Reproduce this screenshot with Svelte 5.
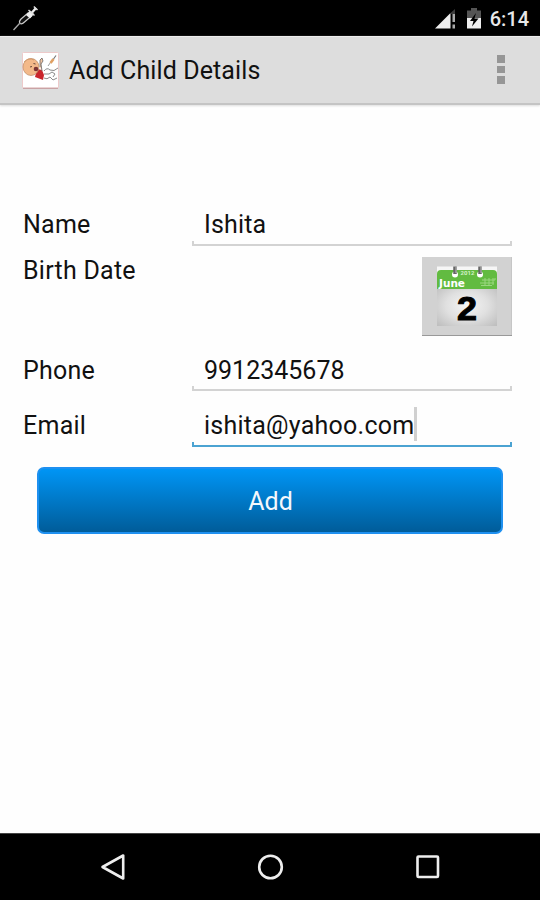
<script>
	let child = {
		name: 'Ishita',
		phone: '9912345678',
		email: 'ishita@yahoo.com'
	};

	let focused = 'email';
</script>

<div class="screen">
	<header class="status">
		<svg class="syringe" width="28" height="28" viewBox="0 0 28 28">
			<path d="M1.500 26 7.500 19.500" stroke="#aaa" stroke-width="1.300" />
			<path d="M8 19.500 Q6.500 17.500 9 15 L16 9 19.500 12 12.500 18 Q10 20.500 8 19.500Z" fill="#111" stroke="#ccc" stroke-width="1.200" />
			<path d="M14 11 18 6.500 22 10 18 14.500Z" fill="#eee" />
			<path d="M16.500 6 22.500 11.500" stroke="#ddd" stroke-width="1.400" />
			<path d="M20 8.500 24 4" stroke="#eee" stroke-width="2.400" />
			<path d="M21.800 2.500 25.500 6" stroke="#ddd" stroke-width="1.500" />
		</svg>
		<div class="indicators">
			<svg class="signal" width="22" height="20" viewBox="0 0 22 20">
				<path d="M0 19.500 15.500 4V19.500Z" fill="#eee" />
				<path d="M15.500 4 20 0V5H15.500Z" fill="#3c3c3c" />
				<path d="M17.500 5H20V13H17.500ZM17.500 15.500H20V19.500H17.500Z" fill="#aaa" />
			</svg>
			<svg class="battery" width="14" height="21" viewBox="0 0 14 21">
				<path d="M0 2.500H4V0H10V2.500H14V11H0Z" fill="#555" />
				<path d="M0 10H14V20.500H0Z" fill="#eee" />
				<path d="M9 5 3 13H6.500L5 18.500 11.500 10.500H7.500Z" fill="#000" />
			</svg>
			<span class="clock">6:14</span>
		</div>
	</header>

	<div class="action-bar">
		<svg class="app-icon" width="37" height="37" viewBox="0 0 37 37">
			<rect x=".5" y=".5" width="36" height="35.500" rx="1" fill="#fff" stroke="#edcaca" />
			<path d="M1 36.300H36" stroke="#c9a3a5" stroke-width="1.200" />
			<path d="M15 17 20 18 22 23 21 28 13 25Z" fill="#c9252c" />
			<path d="M18 15 18 8 20 6 21 9 19 12 20 19" fill="#f4c5a2" stroke="#666" stroke-width=".8" />
			<ellipse cx="9" cy="15" rx="8" ry="8.500" fill="#f3b98a" stroke="#b98a66" stroke-width=".7" />
			<path d="M2 10Q7 5 12 8" fill="none" stroke="#d39a6c" />
			<circle cx="14" cy="17" r="2.300" fill="#7a3435" />
			<path d="M8 15 10 14.500M11.500 11.500 13.500 12" stroke="#64463a" />
			<path d="M22 19Q25 15 28 18Q32 20 36 16M22 26Q25 28 28 25L31 28 35 26M22 22 27 22 30 20 33 22 31 25" fill="none" stroke="#8c8c8c" />
			<path d="M26 14 28.500 10.500" stroke="#999" />
			<path d="M28.500 11 31.500 7" stroke="#e0a063" stroke-width="2.600" />
			<path d="M31.500 7 34 3.500" stroke="#777" stroke-width="1.200" />
		</svg>
		<h1>Add Child Details</h1>
		<div class="overflow">
			<i></i>
			<i></i>
			<i></i>
		</div>
	</div>

	<main>
		<div class="row">
			<span class="label">Name</span>
			<div class="field" class:focused={focused === 'name'}><span>{child.name}</span></div>
		</div>
		<div class="row date">
			<span class="label">Birth Date</span>
			<div class="picker">
				<svg width="90" height="79" viewBox="0 0 90 79">
					<defs>
						<radialGradient id="page" cx=".5" cy=".5" r=".7">
							<stop offset="0" stop-color="#f5f5f5" />
							<stop offset=".5" stop-color="#e0e0e0" />
							<stop offset="1" stop-color="#bdbdbd" />
						</radialGradient>
					</defs>
					<rect x="15" y="9.500" width="60" height="10" fill="#f6f6f6" />
					<rect x="15" y="28" width="60" height="41" fill="url(#page)" />
					<path d="M15 32V17Q15 13 19 13H71Q75 13 75 17V32Z" fill="#62bb41" />
					<circle cx="33" cy="17.500" r="3" fill="#fff" />
					<circle cx="58" cy="17.500" r="3" fill="#fff" />
					<path d="M33 9.500V17M58 9.500V17" stroke="#666" stroke-width="3.500" />
					<path d="M34 10V16M59 10V16" stroke="#bbb" />
					<text x="45.500" y="18" text-anchor="middle" class="year">2012</text>
					<text x="17" y="30" class="month" textLength="26" lengthAdjust="spacingAndGlyphs">June</text>
					<path d="M60 23H73V21M58 26H72M59 28.500H70M63 21V29M67 21V29M71 21V28" fill="none" stroke="#9bd681" />
					<text x="45" y="63" text-anchor="middle" class="day" textLength="20" lengthAdjust="spacingAndGlyphs">2</text>
				</svg>
			</div>
		</div>
		<div class="row phone">
			<span class="label">Phone</span>
			<div class="field" class:focused={focused === 'phone'}><span>{child.phone}</span></div>
		</div>
		<div class="row email">
			<span class="label">Email</span>
			<div class="field" class:focused={focused === 'email'}><span>{child.email}</span></div>
		</div>
		<button type="button">Add</button>
	</main>

	<nav>
		<svg width="28" height="30" viewBox="0 0 28 30">
			<path d="M2.500 15 23.200 3.500V26.500Z" />
		</svg>
		<svg width="28" height="30" viewBox="0 0 28 30">
			<circle cx="13.500" cy="15" r="11.300" />
		</svg>
		<svg width="28" height="30" viewBox="0 0 28 30">
			<rect x="3.500" y="4.500" width="20.500" height="20.500" rx="1" />
		</svg>
	</nav>
</div>

<style>
	:global(body) {
		background: #fefefe;
	}
	.screen {
		display: flex;
		flex-direction: column;
		height: 900px;
		font-family: Roboto, sans-serif;
		font-size: 25px;
		letter-spacing: 0.15px;
		color: #111;
	}
	.status {
		display: flex;
		justify-content: space-between;
		height: 36px;
		box-sizing: border-box;
		padding: 4px 11px 0 12px;
		background: #000;
	}
	.indicators {
		display: flex;
		align-items: flex-start;
	}
	.signal {
		margin: 5px 9px 0 0;
	}
	.battery {
		margin: 4px 9px 0 1px;
	}
	.clock {
		margin-top: 3px;
		font-size: 20px;
		font-weight: 500;
		line-height: 24px;
		letter-spacing: 0;
		color: #e8e8e8;
	}
	.action-bar {
		display: flex;
		align-items: center;
		height: 69px;
		box-sizing: border-box;
		padding: 0 35px 0 22px;
		background: #ddd;
		border-top: 1px solid #eee;
		border-bottom: 2px solid #c4c4c4;
		box-shadow: 0 1px 2px #ddd;
	}
	h1 {
		flex: 1;
		margin: 2px 0 0 10px;
		font-size: 25px;
		font-weight: 400;
		line-height: 30px;
		letter-spacing: 0.1px;
	}
	.overflow {
		display: flex;
		flex-direction: column;
		gap: 3px;
		margin-bottom: 1px;
	}
	.overflow i {
		width: 8px;
		height: 7.5px;
		background: #969696;
	}
	main {
		flex: 1;
		padding: 98px 28px 0 23px;
	}
	.row {
		display: grid;
		grid-template-columns: 169px 320px;
		height: 43px;
	}
	.label,
	.field span {
		line-height: 30px;
		padding-top: 7px;
	}
	.label {
		letter-spacing: 0.25px;
	}
	.field {
		position: relative;
		display: flex;
		align-items: flex-start;
		padding-left: 12px;
	}
	.field::after {
		content: '';
		position: absolute;
		left: 0;
		right: 0;
		bottom: 0;
		height: 3px;
		border: 2px solid #d3d3d3;
		border-top: 0;
	}
	.field.focused::after {
		border-color: #4ba3d2;
	}
	.focused span {
		position: relative;
		letter-spacing: 0.25px;
	}
	.focused span::after {
		content: '';
		position: absolute;
		top: 3px;
		right: -3px;
		width: 3px;
		height: 34px;
		background: #d0d0d0;
	}
	.date {
		height: 79px;
		margin-top: 11px;
	}
	.date .label {
		padding-top: 0;
		margin-top: -1px;
	}
	.picker {
		justify-self: end;
		width: 90px;
		height: 79px;
		background: #d2d2d2;
		box-shadow: inset 0 -1px #999, inset -1px 0 #c6c6c6;
	}
	.picker svg {
		display: block;
		letter-spacing: 0;
	}
	.year {
		font-size: 6px;
		font-weight: 700;
		fill: #d3f1c7;
	}
	.month {
		font-family: 'DejaVu Sans', sans-serif;
		font-size: 11px;
		font-weight: 700;
		fill: #fff;
	}
	.day {
		font-family: 'Liberation Sans', sans-serif;
		font-size: 34px;
		font-weight: 700;
		fill: #000;
		stroke: #000;
		stroke-width: 1px;
	}
	.phone {
		margin-top: 12px;
	}
	.phone span {
		padding-top: 8px;
	}
	.phone .field span {
		padding-top: 8px;
		letter-spacing: 0;
	}
	.email {
		margin-top: 13px;
	}
	button {
		display: block;
		width: 466px;
		height: 67px;
		margin: 20px 0 0 14px;
		padding: 2px 0 0 1px;
		border: 2px solid #1e90f0;
		border-radius: 7px;
		background: linear-gradient(#0095f5, #005c99);
		font: inherit;
		color: #f4f8fc;
	}
	nav {
		display: flex;
		justify-content: center;
		align-items: center;
		gap: 129px;
		height: 66px;
		border-top: 1px solid #444;
		padding-left: 1px;
		background: #000;
	}
	nav svg {
		fill: none;
		stroke: #eee;
		stroke-width: 2.6px;
		stroke-linejoin: round;
	}
</style>
